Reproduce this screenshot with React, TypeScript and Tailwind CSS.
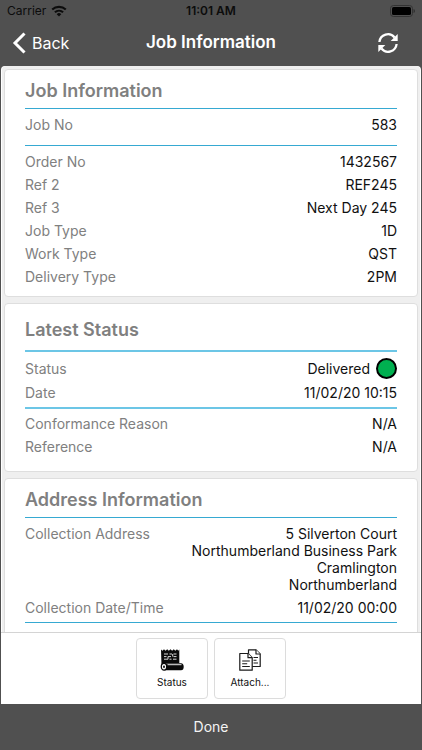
import type { ReactNode } from "react";

function WifiIcon() {
  return (
    <svg viewBox="0 0 16 12" className="h-3 w-4" aria-hidden="true">
      <g fill="none" stroke="#0c0c0c" strokeWidth="2.1">
        <path d="M1.2 4.6a9.8 9.8 0 0 1 13.6 0" />
        <path d="M3.9 7.3a6 6 0 0 1 8.2 0" />
      </g>
      <path d="M8 11.6 5.7 9.2a3.3 3.3 0 0 1 4.6 0Z" fill="#0c0c0c" />
    </svg>
  );
}

function BatteryIcon() {
  return (
    <svg viewBox="0 0 25 12" className="h-3 w-[25px]" aria-hidden="true">
      <rect x="0.5" y="0.5" width="22" height="11" rx="3" fill="none" stroke="#333" />
      <rect x="2" y="2" width="19" height="8" rx="1.6" fill="#000" />
      <path d="M23.6 4v4c.8-.3 1.2-1 1.2-2s-.4-1.7-1.2-2Z" fill="#2b2b2b" />
    </svg>
  );
}

function RefreshIcon() {
  return (
    <svg viewBox="0 0 20 20" className="size-5" aria-hidden="true">
      <g fill="none" stroke="#fff" strokeWidth="2.3">
        <path d="M1.4 9A8.600 8.600 0 0 1 16.600 4.400" />
        <path d="M18.600 11A8.600 8.600 0 0 1 3.400 15.600" />
      </g>
      <path d="M19.700 1v7h-7Z" fill="#fff" />
      <path d="M.3 19v-7h7Z" fill="#fff" />
    </svg>
  );
}

function ScrollIcon() {
  return (
    <svg viewBox="0 0 24 22" className="h-[22px] w-6" aria-hidden="true">
      <path
        d="M1 .5 2.500 1.800 4 .3l1.500 1.500L7.200.3l1.600 1.500L10.500.3l1.600 1.500L13.800.3l1.500 1.500L17 .3l1.300 1.500L19.300.5V14H5L1.500 16.500Z"
        fill="#0a0a0a"
      />
      <path
        d="M4 5h4M9.500 5h2.500M13.500 5h3M4 7.600h2.500M8 7.600h3M13.500 7.600h3M4 10.200h4M9.500 10.200h2M13 10.200h3.500M12.700 5v2.600M8 7.600v2.600"
        fill="none"
        stroke="#d8d8d8"
        strokeWidth="1"
      />
      <path d="M4 14.300h17a2.700 3.500 0 0 1 0 7H4Z" fill="#0a0a0a" />
      <ellipse cx="4" cy="17.800" rx="2.700" ry="3.400" fill="#fff" stroke="#0a0a0a" strokeWidth="1.300" />
      <ellipse cx="4" cy="17.800" rx="0.900" ry="1.400" fill="#0a0a0a" />
      <path d="M7.500 15.700h14" stroke="#fff" strokeWidth="0.900" />
    </svg>
  );
}

function DocumentsIcon() {
  return (
    <svg viewBox="0 0 22 22" className="size-[22px]" aria-hidden="true">
      <g fill="#fff" stroke="#1a1a1a" strokeWidth="1.200" strokeLinejoin="round">
        <path d="M9.500.8h7.500l4.200 4.200v12.500H9.500Z" />
        <path d="M17 .8V5h4.200" />
        <path d="M.8 4.500h8.200l4.200 4.200v12.500H.8Z" />
        <path d="M9 4.500v4.200h4.200" />
      </g>
      <path
        d="M3.200 12h7.600M3.200 14.700h5M3.200 17.500h7.600M14.500 8.500h4.500M14.500 11.300h3M14.500 14h4.500"
        fill="none"
        stroke="#1a1a1a"
        strokeWidth="1.100"
      />
    </svg>
  );
}

function Card({ children }: { children: ReactNode }) {
  return (
    <section className="shrink-0 rounded-sm border border-[#dedede] bg-white px-5">{children}</section>
  );
}

function Row({ label, children }: { label: string; children: ReactNode }) {
  return (
    <div className="flex items-start justify-between py-[3px] text-sm leading-[17px]">
      <dt className="text-[#808080]">{label}</dt>
      <dd className="text-right text-[#111]">{children}</dd>
    </div>
  );
}

export default function App() {
  return (
    <div className="flex h-screen flex-col bg-[#505050] font-[Inter,'Liberation_Sans',sans-serif]">
      <header className="shrink-0 text-white">
        <div className="grid h-[22px] grid-cols-3 items-center px-[7px] text-xs text-[#0c0c0c]">
          <div className="flex items-center gap-[5px]">
            <span>Carrier</span>
            <WifiIcon />
          </div>
          <span className="text-center font-semibold">11:01 AM</span>
          <div className="flex justify-end">
            <BatteryIcon />
          </div>
        </div>
        <div className="grid h-[42px] grid-cols-[1fr_auto_1fr] items-center px-3">
          <button type="button" className="flex items-center gap-[6px] text-base">
            <svg viewBox="0 0 14 22" className="h-[22px] w-[14px]" aria-hidden="true">
              <path d="M12.500 1.500 3 11l9.500 9.500" fill="none" stroke="#fff" strokeWidth="3" />
            </svg>
            Back
          </button>
          <h1 className="text-[17px] font-semibold">Job Information</h1>
          <button type="button" aria-label="Refresh" className="justify-self-end px-3">
            <RefreshIcon />
          </button>
        </div>
      </header>

      <div className="mx-px mt-[2px] flex min-h-0 flex-1 flex-col rounded-t-sm bg-white">
        <main className="mx-px flex min-h-0 flex-1 flex-col gap-[6px] overflow-hidden rounded-t-sm bg-[#efefef] px-[2px] pt-[3px]">
          <Card>
            <h2 className="border-b border-[#36a9d2] pt-[9px] pb-[5px] text-lg leading-6 font-semibold text-[#808080]">
              Job Information
            </h2>
            <dl className="border-b border-[#36a9d2] pt-1 pb-[9px]">
              <Row label="Job No">583</Row>
            </dl>
            <dl className="pt-1 pb-2">
              <Row label="Order No">1432567</Row>
              <Row label="Ref 2">REF245</Row>
              <Row label="Ref 3">Next Day 245</Row>
              <Row label="Job Type">1D</Row>
              <Row label="Work Type">QST</Row>
              <Row label="Delivery Type">2PM</Row>
            </dl>
          </Card>

          <Card>
            <h2 className="border-b-2 border-[#6cc6e6] pt-[14px] pb-2 text-lg leading-6 font-semibold text-[#808080]">
              Latest Status
            </h2>
            <dl className="border-b-2 border-[#6cc6e6] py-[3px]">
              <div className="flex h-[26px] items-center justify-between text-sm leading-[17px]">
                <dt className="text-[#808080]">Status</dt>
                <dd className="flex items-center gap-[6px] text-[#111]">
                  Delivered
                  <span className="size-[21px] rounded-full border-2 border-black bg-[#00b050]" />
                </dd>
              </div>
              <Row label="Date">11/02/20 10:15</Row>
            </dl>
            <dl className="pt-[3px] pb-[13px]">
              <Row label="Conformance Reason">N/A</Row>
              <Row label="Reference">N/A</Row>
            </dl>
          </Card>

          <Card>
            <h2 className="border-b border-[#36a9d2] pt-[9px] pb-[5px] text-lg leading-6 font-semibold text-[#808080]">
              Address Information
            </h2>
            <dl className="border-b border-[#36a9d2] pt-1 pb-[3px]">
              <Row label="Collection Address">
                5 Silverton Court
                <br />
                Northumberland Business Park
                <br />
                Cramlington
                <br />
                Northumberland
              </Row>
              <Row label="Collection Date/Time">11/02/20 00:00</Row>
            </dl>
            <div className="h-10" />
          </Card>
        </main>

        <nav className="flex shrink-0 justify-center gap-[6px] border-t border-[#d4d4d4] bg-white pt-[5px] pb-[5px]">
          <button
            type="button"
            className="flex h-[61px] w-[72px] flex-col items-center gap-[5px] rounded-sm border border-[#dcdcdc] pt-[10px] text-[10px] leading-3 text-[#111]"
          >
            <ScrollIcon />
            Status
          </button>
          <button
            type="button"
            className="flex h-[61px] w-[72px] flex-col items-center gap-[5px] rounded-sm border border-[#dcdcdc] pt-[10px] text-[10px] leading-3 text-[#111]"
          >
            <DocumentsIcon />
            Attach...
          </button>
        </nav>
      </div>

      <button type="button" className="h-[46px] shrink-0 text-sm text-[#f4f4f4]">
        Done
      </button>
    </div>
  );
}
